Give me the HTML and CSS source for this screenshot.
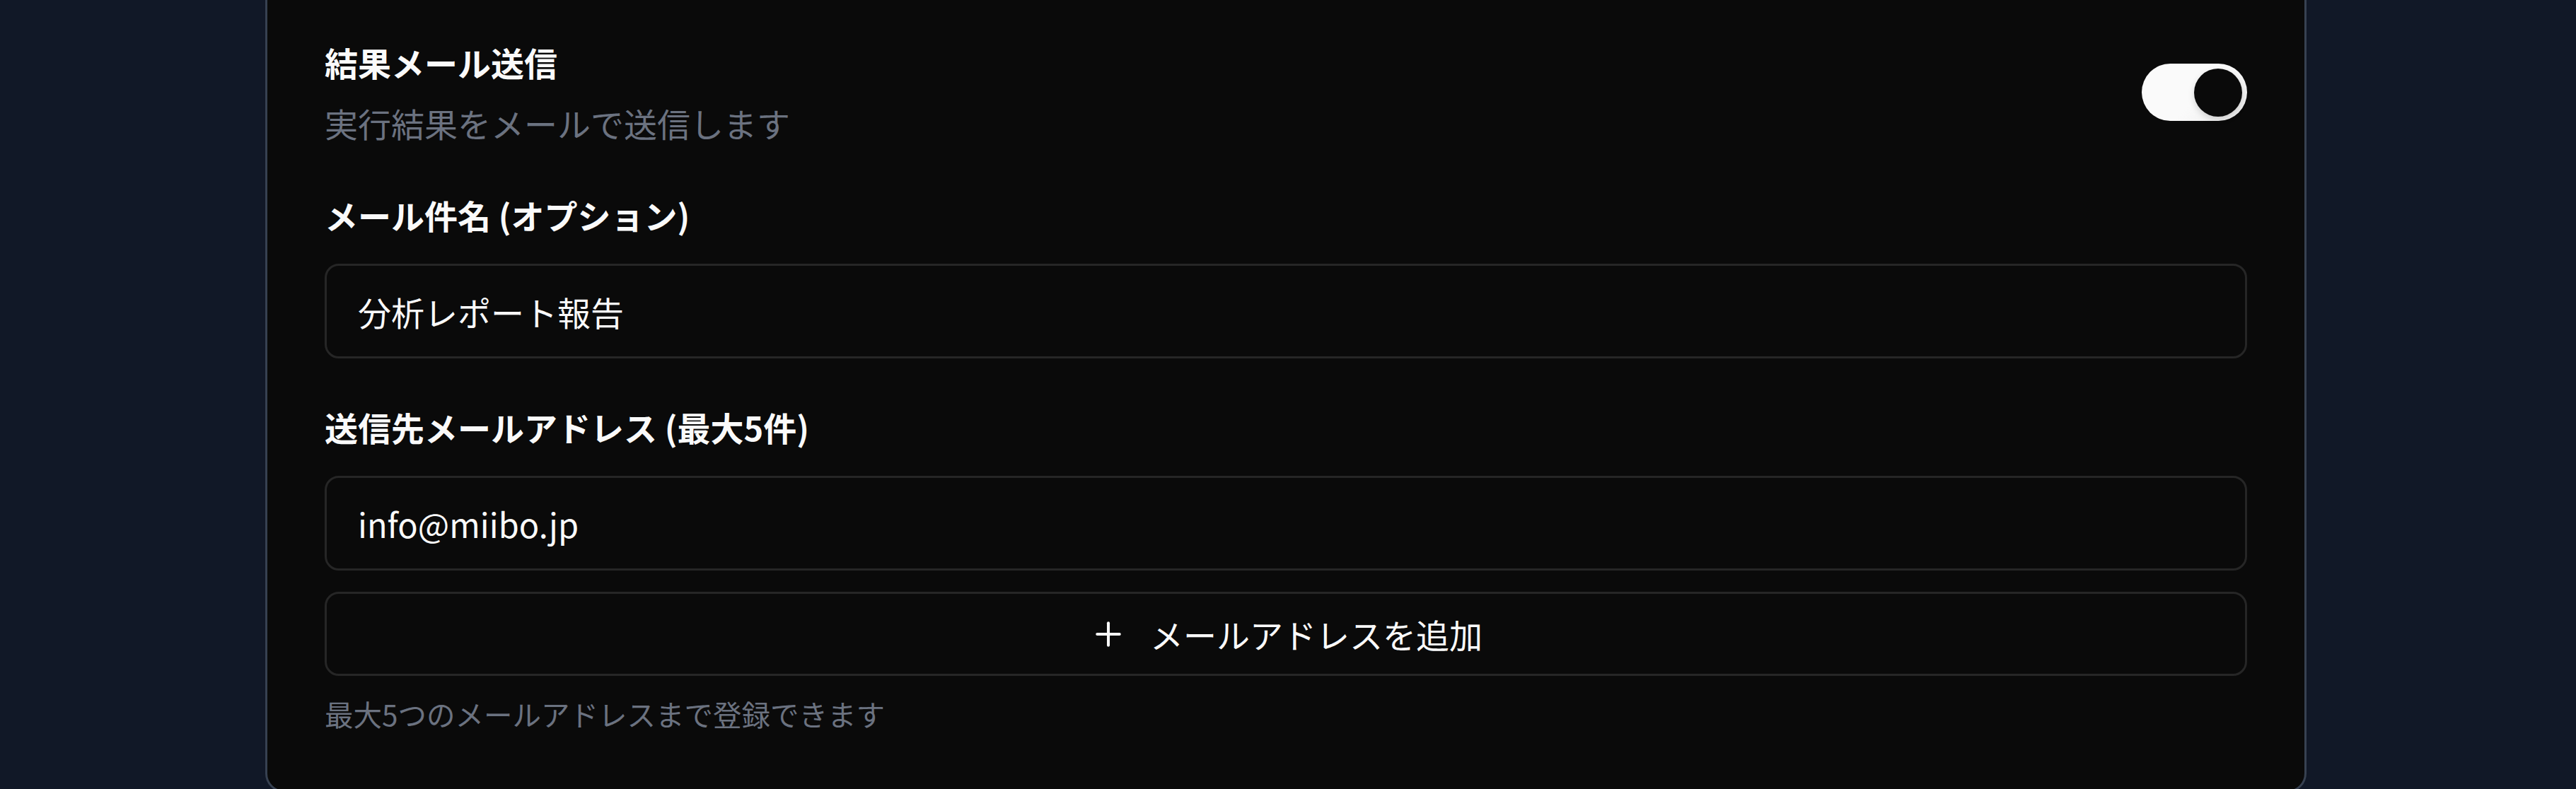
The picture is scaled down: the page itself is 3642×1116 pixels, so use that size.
FILE: index.html
```html
<!DOCTYPE html>
<html lang="ja">
<head>
    <meta charset="UTF-8">
    <meta name="viewport" content="width=device-width, initial-scale=1.0">
    <title>結果メール送信</title>
    <link rel="stylesheet" href="styles.css">
</head>
<body>
    <div class="card">
        <div class="toggle-row">
            <div>
                <div class="row-title">結果メール送信</div>
                <div class="row-desc">実行結果をメールで送信します</div>
            </div>
            <button class="switch" aria-checked="true" role="switch">
                <span class="switch-knob"></span>
            </button>
        </div>

        <div class="field">
            <label for="subject">メール件名 (オプション)</label>
            <input id="subject" class="text-input" type="text" value="分析レポート報告">
        </div>

        <div class="field">
            <label for="email-0">送信先メールアドレス (最大5件)</label>
            <input id="email-0" class="text-input" type="email" value="info@miibo.jp">
            <button class="add-button">
                <svg class="add-icon" viewBox="0 0 24 24" fill="none" stroke="currentColor" stroke-width="2" stroke-linecap="round" stroke-linejoin="round">
                    <path d="M5 12h14"></path>
                    <path d="M12 5v14"></path>
                </svg>
                メールアドレスを追加
            </button>
            <p class="hint">最大5つのメールアドレスまで登録できます</p>
        </div>
    </div>
</body>
</html>
```

FILE: styles.css
```css
body {
    margin: 0;
    padding-right: 6px;
    background-color: #111827;
    color: #fafafa;
    font-family: "Noto Sans CJK JP", "Noto Sans", sans-serif;
}
.card {
    max-width: 2886px;
    box-sizing: border-box;
    margin: -30px auto 0;
    padding: 81px;
    background: #0a0a0a;
    border: 3px solid #374151;
    border-radius: 27px;
}
.toggle-row {
    display: flex;
    justify-content: space-between;
    align-items: center;
}
.row-title {
    font-size: 47px;
    line-height: 67px;
    font-weight: 700;
}
.row-desc {
    margin-top: 19px;
    font-size: 47px;
    line-height: 67px;
    color: #6b7280;
}
.switch {
    display: flex;
    justify-content: flex-end;
    width: 149px;
    height: 81px;
    padding: 0 7px;
    border: none;
    border-radius: 41px;
    background: linear-gradient(135deg, #fafafa 55%, #ececec 100%);
    cursor: pointer;
    align-items: center;
    box-sizing: border-box;
}
.switch-knob {
    width: 68px;
    height: 68px;
    border-radius: 50%;
    background: #0a0a0a;
    box-shadow: 0 4px 10px rgba(0, 0, 0, 0.15);
}
.field {
    margin-top: 63px;
}
label {
    display: block;
    margin-bottom: 36px;
    font-size: 47px;
    line-height: 67px;
    font-weight: 700;
}
.text-input {
    display: block;
    width: 100%;
    height: 134px;
    box-sizing: border-box;
    padding: 0 44px;
    background: #0a0a0a;
    border: 3px solid #262626;
    border-radius: 20px;
    color: #fafafa;
    font-family: inherit;
    font-size: 47px;
    outline: none;
}
.add-button {
    display: flex;
    align-items: center;
    justify-content: center;
    width: 100%;
    height: 119px;
    margin-top: 30px;
    background: #0a0a0a;
    border: 3px solid #262626;
    border-radius: 20px;
    color: #fafafa;
    font-family: inherit;
    font-size: 47px;
    cursor: pointer;
}
.add-icon {
    width: 54px;
    height: 54px;
    margin-right: 32px;
    stroke-width: 1.8;
}
.hint {
    margin: 27px 0 0;
    font-size: 40.5px;
    line-height: 54px;
    color: #6b7280;
}
```
